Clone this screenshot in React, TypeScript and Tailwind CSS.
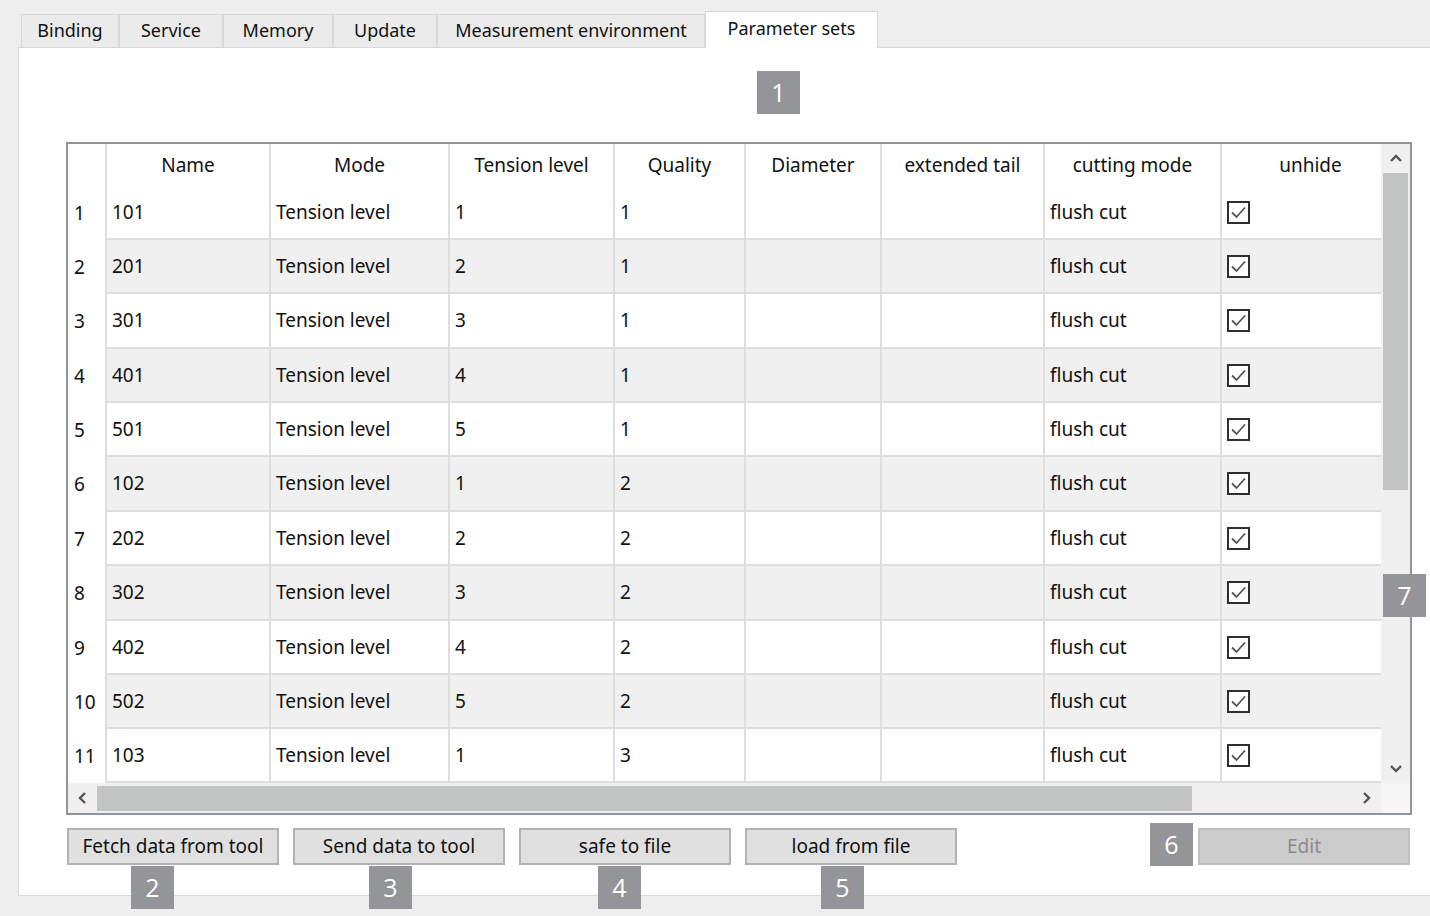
import React from "react";

const tabs = [
  { label: "Binding", w: "w-[98px]" },
  { label: "Service", w: "w-[104px]" },
  { label: "Memory", w: "w-[110px]" },
  { label: "Update", w: "w-[104px]" },
  { label: "Measurement environment", w: "w-[268px]" },
];

const columns = [
  { label: "Name", w: "w-[164px]" },
  { label: "Mode", w: "w-[179px]" },
  { label: "Tension level", w: "w-[165px]" },
  { label: "Quality", w: "w-[131px]" },
  { label: "Diameter", w: "w-[136px]" },
  { label: "extended tail", w: "w-[163px]" },
  { label: "cutting mode", w: "w-[177px]" },
  { label: "unhide", w: "w-[161px]" },
];

const rows = [
  { name: "101", tension: "1", quality: "1", h: "h-[54px]" },
  { name: "201", tension: "2", quality: "1", h: "h-[54px]" },
  { name: "301", tension: "3", quality: "1", h: "h-[55px]" },
  { name: "401", tension: "4", quality: "1", h: "h-[54px]" },
  { name: "501", tension: "5", quality: "1", h: "h-[54px]" },
  { name: "102", tension: "1", quality: "2", h: "h-[55px]" },
  { name: "202", tension: "2", quality: "2", h: "h-[54px]" },
  { name: "302", tension: "3", quality: "2", h: "h-[55px]" },
  { name: "402", tension: "4", quality: "2", h: "h-[54px]" },
  { name: "502", tension: "5", quality: "2", h: "h-[54px]" },
  { name: "103", tension: "1", quality: "3", h: "h-[54px]" },
];

// grey numbered callout
const Badge = ({ n, pos }: { n: number; pos: string }) => (
  <div
    className={`absolute ${pos} w-[43px] h-[43px] bg-[#939598] text-white text-[25px] flex items-center justify-center font-['Open_Sans',sans-serif]`}
  >
    {n}
  </div>
);

const Chevron = ({ dir }: { dir: "up" | "down" | "left" | "right" }) => {
  const pts = {
    up: "1,7 6,2 11,7",
    down: "1,2 6,7 11,2",
    left: "7,1 2,6 7,11",
    right: "2,1 7,6 2,11",
  }[dir];
  const vertical = dir === "up" || dir === "down";
  return (
    <svg
      width={vertical ? 12 : 9}
      height={vertical ? 9 : 12}
      viewBox={vertical ? "0 0 12 9" : "0 0 9 12"}
    >
      <polyline points={pts} fill="none" stroke="#555" strokeWidth="2.4" />
    </svg>
  );
};

const CheckBox = () => (
  <svg width="23" height="23" viewBox="0 0 23 23">
    <rect x="1" y="1" width="21" height="21" fill="#fff" stroke="#2e2e2e" strokeWidth="2" />
    <polyline points="5,11.5 9.5,16 18,6.5" fill="none" stroke="#555" strokeWidth="1.8" />
  </svg>
);

const Button = ({ label, disabled }: { label: string; disabled?: boolean }) => (
  <button
    type="button"
    className={
      disabled
        ? "w-[212px] h-[37px] bg-[#cccccc] border-2 border-[#bfbfbf] text-[#8c8c8c] text-[19px]"
        : "w-[212px] h-[37px] bg-[#e0e0e0] border-2 border-[#b3b3b3] text-[#111] text-[19px]"
    }
  >
    {label}
  </button>
);

export default function App() {
  return (
    <div className="relative w-[1430px] h-[916px] bg-[#eeeeee] overflow-hidden font-['Noto_Sans',sans-serif] text-[#111]">
      {/* Tabs */}
      <div className="flex items-end pl-[21px] pt-[10px] h-[47px]">
        {tabs.map((t) => (
          <div
            key={t.label}
            className={`${t.w} h-[33px] border border-b-0 border-[#d9d9d9] bg-[#ebebeb] text-[18px] flex items-center justify-center pb-[1px]`}
          >
            {t.label}
          </div>
        ))}
        <div className="w-[173px] h-[37px] border border-b-0 border-[#d9d9d9] bg-white text-[18px] flex items-center justify-center pb-[3px] -mb-px relative z-10">
          Parameter sets
        </div>
      </div>

      {/* Panel */}
      <div className="ml-[18px] h-[849px] bg-white border border-r-0 border-[#d9d9d9] pl-[47px] pt-[94px]">
        {/* Table */}
        <div className="w-[1346px] h-[673px] border-2 border-[#8e959c] flex flex-col">
          <div className="flex flex-1 min-h-0">
            <div className="w-[1313px] flex flex-col text-[19px]">
              {/* Header */}
              <div className="flex h-[42px]">
                <div className="w-[37px]" />
                {columns.map((c, i) => (
                  <div
                    key={c.label}
                    className={`${c.w} border-l-2 border-[#dedede] flex items-center justify-center ${
                      i === columns.length - 1 ? "pl-[18px]" : ""
                    }`}
                  >
                    {c.label}
                  </div>
                ))}
              </div>
              {/* Rows */}
              {rows.map((r, idx) => {
                const bg = idx % 2 === 1 ? "bg-[#f0f0f0]" : "bg-white";
                const cell = `border-l-2 border-b-2 border-[#dedede] ${bg} flex items-center pl-[5px]`;
                return (
                  <div key={idx} className={`flex ${r.h}`}>
                    <div className="w-[37px] flex items-center pl-[6px]">{idx + 1}</div>
                    <div className={`w-[164px] ${cell}`}>{r.name}</div>
                    <div className={`w-[179px] ${cell}`}>Tension level</div>
                    <div className={`w-[165px] ${cell}`}>{r.tension}</div>
                    <div className={`w-[131px] ${cell}`}>{r.quality}</div>
                    <div className={`w-[136px] ${cell}`} />
                    <div className={`w-[163px] ${cell}`} />
                    <div className={`w-[177px] ${cell}`}>flush cut</div>
                    <div className={`w-[161px] ${cell} pl-[5px]`}>
                      <CheckBox />
                    </div>
                  </div>
                );
              })}
            </div>
            {/* Vertical scrollbar */}
            <div className="w-[29px] bg-[#f0f0f0] flex flex-col">
              <div className="h-[29px] flex items-center justify-center">
                <Chevron dir="up" />
              </div>
              <div className="h-[317px] mx-[2px] bg-[#c2c3c3]" />
              <div className="flex-1" />
              <div className="h-[29px] flex items-center justify-center">
                <Chevron dir="down" />
              </div>
            </div>
          </div>
          {/* Horizontal scrollbar */}
          <div className="flex h-[30px]">
            <div className="w-[1313px] bg-[#f0f0f0] flex items-center">
              <div className="w-[29px] h-full flex items-center justify-center">
                <Chevron dir="left" />
              </div>
              <div className="w-[1095px] h-[25px] bg-[#c2c3c3]" />
              <div className="flex-1" />
              <div className="w-[29px] h-full flex items-center justify-center">
                <Chevron dir="right" />
              </div>
            </div>
            <div className="w-[29px] bg-[#f7f7f7]" />
          </div>
        </div>

        {/* Buttons */}
        <div className="flex w-[1344px] mt-[13px] pl-[1px] gap-[14px]">
          <Button label="Fetch data from tool" />
          <Button label="Send data to tool" />
          <Button label="safe to file" />
          <Button label="load from file" />
          <div className="flex-1" />
          <Button label="Edit" disabled />
        </div>
      </div>

      <Badge n={1} pos="left-[757px] top-[71px]" />
      <Badge n={2} pos="left-[131px] top-[866px]" />
      <Badge n={3} pos="left-[369px] top-[866px]" />
      <Badge n={4} pos="left-[598px] top-[866px]" />
      <Badge n={5} pos="left-[821px] top-[866px]" />
      <Badge n={6} pos="left-[1150px] top-[823px]" />
      <Badge n={7} pos="left-[1383px] top-[574px]" />
    </div>
  );
}
